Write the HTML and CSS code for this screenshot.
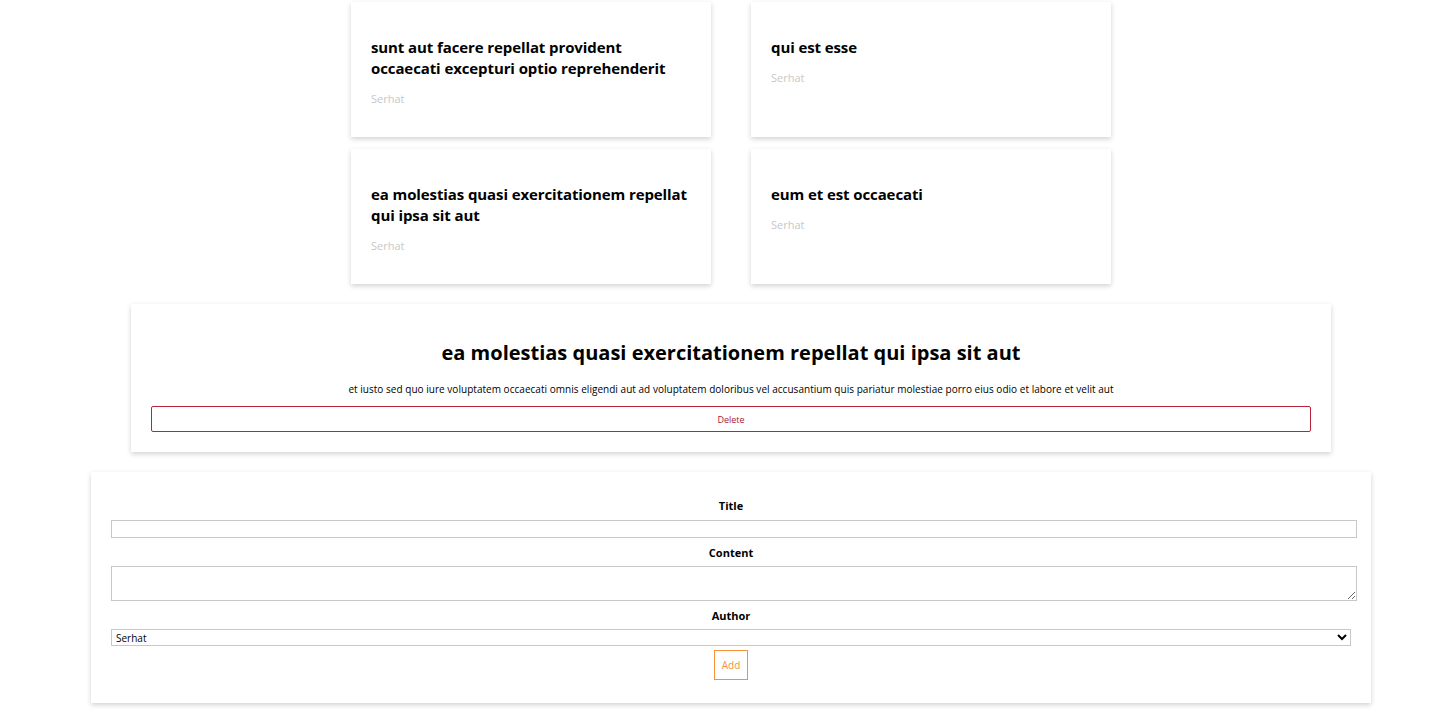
FILE: index.html
```html
<!DOCTYPE html>
<html lang="en">
<head>
<meta charset="utf-8">
<title>Posts</title>
<link rel="stylesheet" href="styles.css">
</head>
<body>
<div class="page">
  <div class="posts">
    <div class="post-card">
      <h3 class="post-title">sunt aut facere repellat provident occaecati excepturi optio reprehenderit</h3>
      <p class="post-author">Serhat</p>
    </div>
    <div class="post-card">
      <h3 class="post-title">qui est esse</h3>
      <p class="post-author">Serhat</p>
    </div>
    <div class="post-card">
      <h3 class="post-title">ea molestias quasi exercitationem repellat qui ipsa sit aut</h3>
      <p class="post-author">Serhat</p>
    </div>
    <div class="post-card">
      <h3 class="post-title">eum et est occaecati</h3>
      <p class="post-author">Serhat</p>
    </div>
  </div>

  <div class="detail">
    <h2 class="detail-title">ea molestias quasi exercitationem repellat qui ipsa sit aut</h2>
    <p class="detail-body">et iusto sed quo iure voluptatem occaecati omnis eligendi aut ad voluptatem doloribus vel accusantium quis pariatur molestiae porro eius odio et labore et velit aut</p>
    <button class="btn-delete" type="button">Delete</button>
  </div>

  <form class="new-post">
    <label class="field-label field-label-first" for="title">Title</label>
    <input class="field-input" id="title" type="text">
    <label class="field-label" for="content">Content</label>
    <textarea class="field-textarea" id="content"></textarea>
    <label class="field-label" for="author">Author</label>
    <select class="field-select" id="author">
      <option>Serhat</option>
    </select>
    <button class="btn-add" type="button">Add</button>
  </form>
</div>
</body>
</html>
```

FILE: styles.css
```css
html, body {
  margin: 0;
  padding: 0;
  background: #fff;
}

body {
  font-family: "Open Sans", "Noto Sans", sans-serif;
  color: #000;
}

.page {
  width: 1280px;
  margin: 0 0 0 91px;
  padding-top: 2px;
  padding-bottom: 16px;
}

.posts {
  display: grid;
  grid-template-columns: 360px 360px;
  column-gap: 40px;
  row-gap: 12px;
  justify-content: center;
}

.post-card {
  background: #fff;
  box-shadow: 0 2px 5px rgba(0, 0, 0, 0.18);
  padding: 20px;
}

.post-title {
  font-size: 15px;
  font-weight: 700;
  line-height: 21px;
  margin: 15px 0 12px;
  letter-spacing: -0.1px;
}

.post-author {
  font-size: 11px;
  line-height: 16px;
  color: #c8c8c8;
  margin: 0 0 10px;
}

.detail {
  margin: 20px 40px 0;
  background: #fff;
  box-shadow: 0 2px 5px rgba(0, 0, 0, 0.18);
  padding: 20px;
  text-align: center;
}

.detail-title {
  font-size: 20px;
  font-weight: 700;
  line-height: 28px;
  margin: 15px 0 14px;
}

.detail-body {
  font-size: 10px;
  line-height: 16px;
  letter-spacing: 0.03px;
  margin: 0 0 9px;
}

.btn-delete {
  display: block;
  width: 100%;
  height: 26px;
  background: #fff;
  border: 1px solid #b8243a;
  border-radius: 2px;
  color: #a8203a;
  font-family: inherit;
  font-size: 9px;
  margin: 0;
  cursor: pointer;
}

.new-post {
  margin-top: 20px;
  background: #fff;
  box-shadow: 0 2px 5px rgba(0, 0, 0, 0.18);
  padding: 20px 20px 23px;
  display: flex;
  flex-direction: column;
  align-items: flex-start;
}

.field-label {
  align-self: stretch;
  text-align: center;
  font-size: 11px;
  font-weight: 700;
  line-height: 16px;
  margin: 7px 0 5px;
}

.field-label-first {
  margin: 6px 0 6px;
}

.field-input {
  box-sizing: content-box;
  width: 1240px;
  height: 12px;
  padding: 2px;
  border: 1px solid #c8c8c8;
  margin: 0;
  font-family: inherit;
  font-size: 11px;
}

.field-textarea {
  box-sizing: content-box;
  width: 1240px;
  height: 29px;
  padding: 2px;
  border: 1px solid #c8c8c8;
  margin: 0;
  font-family: inherit;
  font-size: 11px;
  resize: both;
}

.field-select {
  box-sizing: border-box;
  width: 1240px;
  height: 17px;
  border: 1px solid #c8c8c8;
  border-radius: 0;
  background: #fff;
  margin: 0;
  padding: 0;
  font-family: inherit;
  font-size: 10px;
  color: #000;
}

.btn-add {
  align-self: center;
  margin-top: 4px;
  width: 34px;
  height: 30px;
  background: #fff;
  border: 1px solid #f7903b;
  border-radius: 0;
  color: #f7903b;
  font-family: inherit;
  font-size: 10px;
  padding: 0;
  cursor: pointer;
}
```
